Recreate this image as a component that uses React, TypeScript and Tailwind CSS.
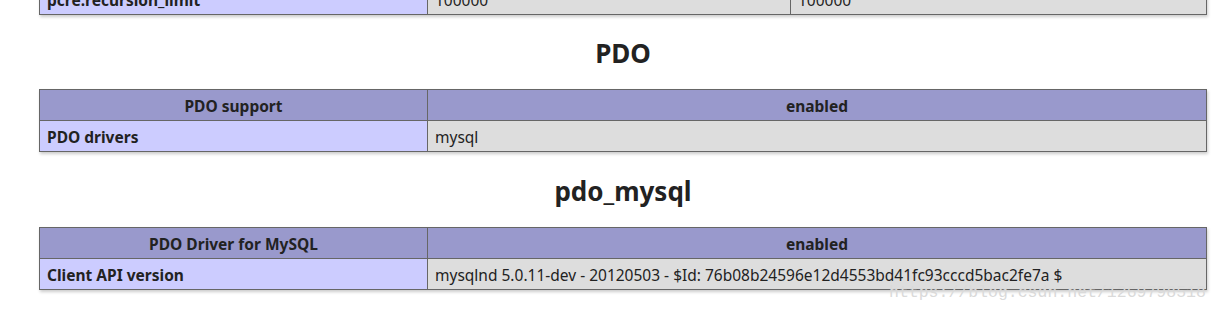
export default function App() {
  const font = { fontFamily: '"Noto Sans", "Open Sans", Arial, sans-serif' };
  const th = "border border-[#666] bg-[#9999cc] h-[31px] px-[6px] pt-[3px] pb-0 text-center font-bold text-[15.5px]";
  const key = "border border-[#666] bg-[#ccccff] h-[31px] px-[7px] pt-[3px] pb-0 text-left font-bold text-[15.5px]";
  const val = "border border-[#666] bg-[#dddddd] h-[31px] px-[7px] pt-[3px] pb-0 text-left text-[15.5px]";

  return (
    <div className="relative h-[313px] w-[1220px] overflow-hidden bg-white text-[#222]" style={font}>
      <table className="-mt-[17px] ml-[39px] w-[1168px] border-collapse shadow-[1px_2px_3px_#ccc]">
        <tbody>
          <tr>
            <td className={`${key} w-[388px]`}>pcre.recursion_limit</td>
            <td className={`${val} w-[363px]`}>100000</td>
            <td className={val}>100000</td>
          </tr>
        </tbody>
      </table>

      <h2 className="ml-[39px] mt-[20px] mb-[18px] w-[1168px] text-center text-[26px] font-bold leading-[36px]">PDO</h2>

      <table className="ml-[39px] w-[1168px] border-collapse shadow-[1px_2px_3px_#ccc]">
        <tbody>
          <tr>
            <th className={`${th} w-[388px]`}>PDO support</th>
            <th className={th}>enabled</th>
          </tr>
          <tr>
            <td className={key}>PDO drivers</td>
            <td className={val}>mysql</td>
          </tr>
        </tbody>
      </table>

      <h2 className="ml-[39px] mt-[21px] mb-[18px] w-[1168px] text-center text-[26px] font-bold leading-[36px]">pdo_mysql</h2>

      <table className="ml-[39px] w-[1168px] border-collapse shadow-[1px_2px_3px_#ccc]">
        <tbody>
          <tr>
            <th className={`${th} w-[388px]`}>PDO Driver for MySQL</th>
            <th className={th}>enabled</th>
          </tr>
          <tr>
            <td className={key}>Client API version</td>
            <td className={val}>
              mysqlnd 5.0.11-dev - 20120503 - $Id: 76b08b24596e12d4553bd41fc93cccd5bac2fe7a $
            </td>
          </tr>
        </tbody>
      </table>

      <div
        className="absolute left-[889px] top-[283px] text-[16.5px] leading-[20px] text-[#dadada]"
        style={{ fontFamily: '"Liberation Mono", "DejaVu Sans Mono", monospace' }}
      >
        https://blog.csdn.net/1269798518
      </div>
    </div>
  );
}
